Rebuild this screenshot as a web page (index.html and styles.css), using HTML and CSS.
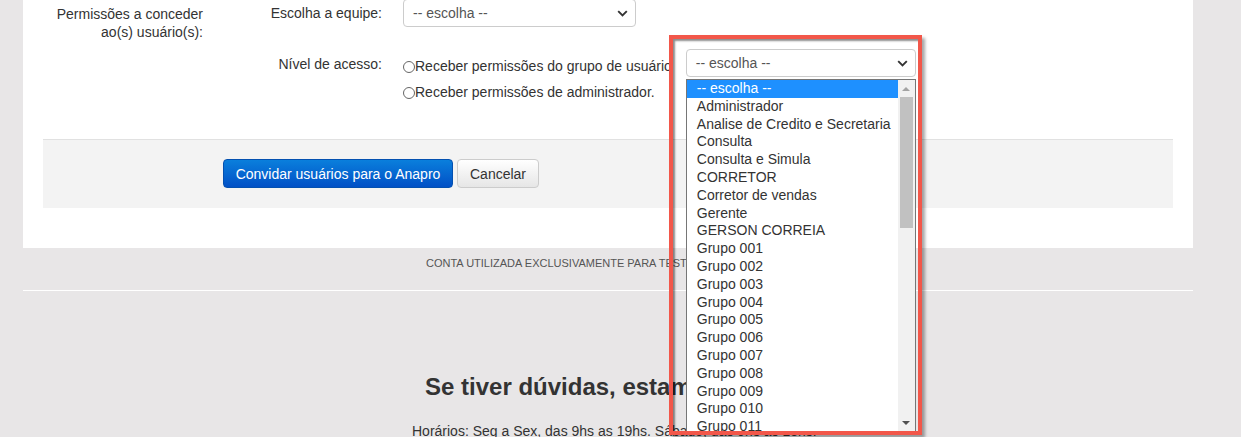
FILE: index.html
```html
<!DOCTYPE html>
<html lang="pt-BR">
<head>
<meta charset="utf-8">
<title>Convidar usuários</title>
<link rel="stylesheet" href="styles.css">
</head>
<body>
<div class="page">
  <section class="card">
    <div class="form">
      <div class="group-label">Permissões a conceder<br>ao(s) usuário(s):</div>
      <div class="fields">
        <div class="field">
          <div class="field-label">Escolha a equipe:</div>
          <div class="select sel-team">
            <span>-- escolha --</span>
            <svg class="chev" width="11" height="7" viewBox="0 0 11 7"><path d="M1.2 1.2l4.3 4.3 4.3-4.3" fill="none" stroke="#333" stroke-width="1.9"/></svg>
          </div>
        </div>
        <div class="field field-access">
          <div class="field-label">Nível de acesso:</div>
          <div class="radios">
            <div class="radio-line">
              <label class="radio"><span class="circle"></span>Receber permissões do grupo de usuário</label>
              <div class="dropdown">
                <div class="select sel-group">
                  <span>-- escolha --</span>
                  <svg class="chev" width="11" height="7" viewBox="0 0 11 7"><path d="M1.2 1.2l4.3 4.3 4.3-4.3" fill="none" stroke="#333" stroke-width="1.9"/></svg>
                </div>
                <div class="listbox">
                  <ul class="options">
                    <li class="selected">-- escolha --</li>
                    <li>Administrador</li>
                    <li>Analise de Credito e Secretaria</li>
                    <li>Consulta</li>
                    <li>Consulta e Simula</li>
                    <li>CORRETOR</li>
                    <li>Corretor de vendas</li>
                    <li>Gerente</li>
                    <li>GERSON CORREIA</li>
                    <li>Grupo 001</li>
                    <li>Grupo 002</li>
                    <li>Grupo 003</li>
                    <li>Grupo 004</li>
                    <li>Grupo 005</li>
                    <li>Grupo 006</li>
                    <li>Grupo 007</li>
                    <li>Grupo 008</li>
                    <li>Grupo 009</li>
                    <li>Grupo 010</li>
                    <li>Grupo 011</li>
                  </ul>
                  <div class="scrollbar">
                    <div class="sb-btn"><span class="tri-up"></span></div>
                    <div class="sb-track"><div class="sb-thumb"></div></div>
                    <div class="sb-btn sb-down"><span class="tri-down"></span></div>
                  </div>
                </div>
                <div class="highlight-box"></div>
              </div>
            </div>
            <div class="radio-line">
              <label class="radio"><span class="circle"></span>Receber permissões de administrador.</label>
            </div>
          </div>
        </div>
      </div>
    </div>
    <div class="actions">
      <button class="btn btn-primary">Convidar usuários para o Anapro</button>
      <button class="btn btn-default">Cancelar</button>
    </div>
  </section>
  <div class="note">CONTA UTILIZADA EXCLUSIVAMENTE PARA TESTES</div>
  <div class="divider"></div>
  <div class="help">
    <h2 class="help-title">Se tiver dúvidas, estamos aqui!</h2>
    <p class="help-hours">Horários: Seg a Sex, das 9hs as 19hs. Sábado, das 9hs as 13hs.</p>
  </div>
</div>
</body>
</html>
```
FILE: styles.css
```css
html, body {
  margin: 0;
  height: 437px;
  overflow: hidden;
}
body {
  background: #e8e6e7;
  font-family: "Liberation Sans", Arial, sans-serif;
  font-size: 14px;
  line-height: 1.42857;
  color: #333;
}
.page {
  width: 1170px;
  margin-left: 23px;
}
.card {
  background: #fff;
  height: 248px;
  padding: 0 20px;
  box-sizing: border-box;
  display: flow-root;
}
.form {
  display: grid;
  grid-template-columns: 160px 1fr;
  margin-top: -1px;
}
.group-label {
  text-align: right;
  padding-top: 6px;
  line-height: 18px;
}
.field {
  display: flex;
  align-items: flex-start;
}
.field-label {
  width: 179px;
  margin-right: 21px;
  text-align: right;
  padding-top: 6px;
  line-height: 16px;
  flex: none;
}
.select {
  height: 28px;
  box-sizing: border-box;
  border: 1px solid #ccc;
  border-radius: 4px;
  background: #fff;
  color: #555;
  padding: 0 9px;
  display: flex;
  align-items: center;
  justify-content: space-between;
  line-height: 16px;
}
.select .chev {
  margin-right: -2px;
  margin-top: 1px;
}
.sel-team { width: 233px; }
.sel-group { width: 230px; }
.field-access {
  margin-top: 22px;
}
.field-access .field-label {
  padding-top: 7px;
}
.radio-line {
  display: flex;
  align-items: flex-start;
}
.radio {
  display: flex;
  align-items: center;
  padding-top: 9px;
  line-height: 16px;
  white-space: nowrap;
}
.radio-line + .radio-line .radio {
  padding-top: 7px;
}
.circle {
  width: 12px;
  height: 12px;
  box-sizing: border-box;
  border: 1px solid #666;
  border-radius: 50%;
  background: #fff;
  margin-top: 2px;
  flex: none;
}
.dropdown {
  position: relative;
  margin-left: 14px;
}
.listbox {
  position: absolute;
  left: 0;
  top: 30px;
  width: 230px;
  height: 354px;
  box-sizing: border-box;
  border: 1px solid #767676;
  background: #fff;
  display: flex;
  overflow: hidden;
  z-index: 2;
}
.options {
  list-style: none;
  margin: 0;
  padding: 0;
  flex: 1;
  color: #333;
}
.options li {
  height: 17.8px;
  line-height: 17.8px;
  padding-left: 10px;
  white-space: nowrap;
}
.options li.selected {
  background: #1e90ff;
  color: #fff;
}
.scrollbar {
  width: 17px;
  background: #f1f1f1;
  display: flex;
  flex-direction: column;
  flex: none;
  height: 351px;
}
.sb-btn {
  height: 17px;
  display: flex;
  align-items: center;
  justify-content: center;
  flex: none;
}
.tri-up {
  width: 0;
  height: 0;
  border-left: 4px solid transparent;
  border-right: 4px solid transparent;
  border-bottom: 4px solid #a3a3a3;
}
.tri-down {
  width: 0;
  height: 0;
  border-left: 4px solid transparent;
  border-right: 4px solid transparent;
  border-top: 4px solid #505050;
}
.sb-track {
  flex: 1;
  padding: 0 2px;
}
.sb-thumb {
  height: 131px;
  background: #c1c1c1;
}
.highlight-box {
  position: absolute;
  left: -17px;
  top: -14px;
  width: 253px;
  height: 400px;
  box-sizing: border-box;
  border: 4px solid #f2574a;
  box-shadow: 3px 3px 3px rgba(0, 0, 0, 0.35), inset 2px 2px 2px rgba(0, 0, 0, 0.45);
  z-index: 3;
  pointer-events: none;
}
.actions {
  margin-top: 39px;
  background: #f3f3f3;
  border-top: 1px solid #e1e1e1;
  padding: 19px 0 20px 180px;
  display: flex;
  gap: 4px;
}
.btn {
  height: 29px;
  box-sizing: border-box;
  border-radius: 4px;
  font-family: "Liberation Sans", Arial, sans-serif;
  font-size: 14px;
  padding: 0;
  text-align: center;
}
.btn-primary {
  width: 230px;
  color: #fff;
  border: 1px solid #0350b0;
  background: linear-gradient(#0a7fdc, #0150c6);
}
.btn-default {
  width: 82px;
  color: #333;
  border: 1px solid #ccc;
  background: linear-gradient(#fff, #e6e6e6);
}
.note {
  margin-top: 8px;
  padding-left: 403px;
  font-size: 11px;
  line-height: 14px;
  color: #555;
  text-transform: uppercase;
  white-space: nowrap;
}
.divider {
  margin-top: 20px;
  border-top: 1px solid #fff;
}
.help {
  padding-top: 82px;
}
.help-title {
  margin: 0;
  padding-left: 402px;
  font-size: 24px;
  line-height: 28px;
  font-weight: bold;
  color: #333;
  white-space: nowrap;
}
.help-hours {
  margin: 20px 0 0;
  padding-left: 389px;
  line-height: 20px;
  white-space: nowrap;
}
```
